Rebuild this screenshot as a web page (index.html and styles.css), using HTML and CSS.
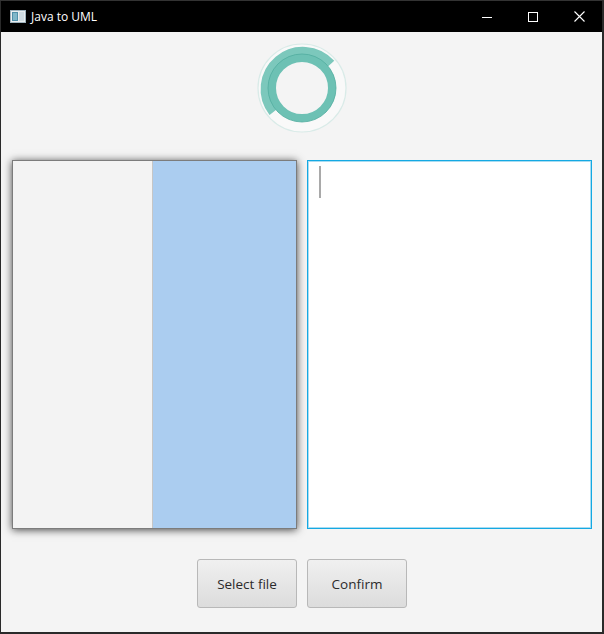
FILE: index.html
```html
<!DOCTYPE html>
<html>
<head>
<meta charset="utf-8">
<link rel="stylesheet" href="styles.css">
</head>
<body>
<div class="window">
  <div class="titlebar">
    <div class="title">
      <svg class="app-icon" width="16" height="13" viewBox="0 0 16 13">
        <rect x="0.5" y="0.5" width="15" height="12" fill="#e9eef0" stroke="#9fb3bd"/>
        <rect x="2" y="2" width="6" height="9" fill="#4f8fa8"/>
        <rect x="3" y="3" width="4" height="7" fill="#7fb7c9"/>
        <rect x="9" y="2" width="5" height="9" fill="#cfdce2"/>
      </svg>
      <span class="title-text">Java to UML</span>
    </div>
    <div class="controls">
      <div class="ctl">
        <svg width="10" height="10" viewBox="0 0 10 10"><path d="M0 5.5H10" stroke="#fff" stroke-width="1"/></svg>
      </div>
      <div class="ctl">
        <svg width="10" height="10" viewBox="0 0 10 10"><rect x="0.5" y="0.5" width="9" height="9" fill="none" stroke="#fff" stroke-width="1"/></svg>
      </div>
      <div class="ctl">
        <svg width="11" height="11" viewBox="0 0 11 11"><path d="M0.5 0.5L10.5 10.5M10.5 0.5L0.5 10.5" stroke="#fff" stroke-width="1.1"/></svg>
      </div>
    </div>
  </div>
  <div class="content">
    <div class="spinner">
      <svg width="90" height="90" viewBox="0 0 90 90">
        <circle cx="45" cy="45" r="44" fill="#f9f9f9" stroke="#d9ebe8" stroke-width="1.2"/>
        <path d="M15.9 69.4 A38 38 0 0 1 74.1 20.6" fill="none" stroke="#7cc8bc" stroke-width="8.5"/>
        <circle cx="45" cy="45" r="30" fill="#f4f4f4" stroke="#6dc1b4" stroke-width="8"/>
        <circle cx="45" cy="45" r="34" fill="none" stroke="#52ad9f" stroke-width="0.8"/>
      </svg>
    </div>
    <div class="panels">
      <div class="list-panel">
        <div class="list-left"></div>
        <div class="list-right"></div>
      </div>
      <div class="textarea">
        <div class="caret"></div>
      </div>
    </div>
    <div class="buttons">
      <button class="btn">Select file</button>
      <button class="btn">Confirm</button>
    </div>
  </div>
</div>
</body>
</html>
```

FILE: styles.css
```css
* { box-sizing: border-box; }
html, body {
  margin: 0;
  padding: 0;
  width: 604px;
  height: 634px;
  overflow: hidden;
  background: #2a2a2a;
}
.window {
  width: 604px;
  height: 634px;
  display: flex;
  flex-direction: column;
  padding: 0 2px 2px 1px;
  border-top: 1px solid #333;
  background: #2a2a2a;
}
.titlebar {
  height: 31px;
  background: #000;
  display: flex;
  align-items: center;
  justify-content: space-between;
  flex: none;
}
.title {
  display: flex;
  align-items: center;
  padding-left: 9px;
}
.app-icon { display: block; }
.title-text {
  color: #fff;
  font-family: "Open Sans", "Noto Sans", sans-serif;
  font-size: 12px;
  margin-left: 5px;
  margin-top: -1px;
}
.controls {
  display: flex;
  height: 100%;
}
.ctl {
  width: 46px;
  height: 100%;
  display: flex;
  align-items: center;
  justify-content: center;
}
.content {
  flex: 1;
  background: #f4f4f4;
  display: flex;
  flex-direction: column;
  align-items: center;
  padding-top: 11px;
}
.spinner {
  width: 90px;
  height: 90px;
  margin-left: 1px;
}
.spinner svg { display: block; }
.panels {
  display: flex;
  gap: 10px;
  margin-top: 27px;
  width: 601px;
  padding-left: 11px;
  padding-right: 10px;
}
.list-panel {
  width: 285px;
  height: 369px;
  display: flex;
  border: 1px solid #7c7c7c;
  box-shadow: 0 1px 8px rgba(0,0,0,0.72);
}
.list-left {
  width: 140px;
  background: #f3f3f3;
  border-right: 1px solid #c6c6c6;
}
.list-right {
  flex: 1;
  background: #abcdf0;
}
.textarea {
  width: 285px;
  height: 369px;
  background: #fff;
  border: 1px solid #14a9e3;
  box-shadow: inset 0 0 0 1px #a9dcf1;
  padding: 5px 0 0 11px;
}
.caret {
  width: 2px;
  height: 32px;
  background: #a9a9a9;
}
.buttons {
  display: flex;
  gap: 10px;
  margin-top: 30px;
  margin-left: 1px;
}
.btn {
  width: 100px;
  height: 49px;
  border: 1px solid #b8b8b8;
  border-radius: 3px;
  background: linear-gradient(#f0f0f0, #dcdcdc);
  font-family: "Open Sans", "Noto Sans", sans-serif;
  font-size: 13.5px;
  color: #2b2b2b;
  padding: 0;
}
```
